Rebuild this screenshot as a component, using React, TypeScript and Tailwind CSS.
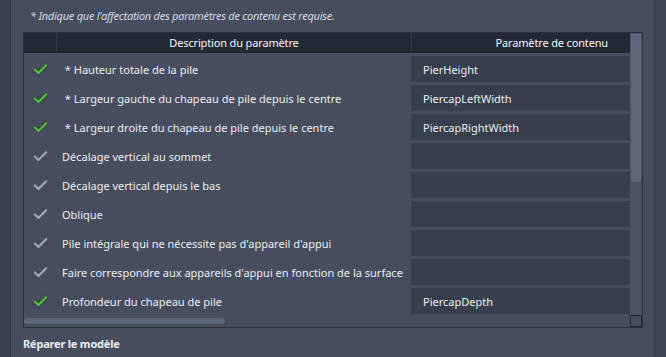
import { Check } from "lucide-react";

const rows = [
  { label: " * Hauteur totale de la pile", value: "PierHeight", ok: true },
  { label: " * Largeur gauche du chapeau de pile depuis le centre", value: "PiercapLeftWidth", ok: true },
  { label: " * Largeur droite du chapeau de pile depuis le centre", value: "PiercapRightWidth", ok: true },
  { label: "Décalage vertical au sommet", value: "", ok: false },
  { label: "Décalage vertical depuis le bas", value: "", ok: false },
  { label: "Oblique", value: "", ok: false },
  { label: "Pile intégrale qui ne nécessite pas d'appareil d'appui", value: "", ok: false },
  { label: "Faire correspondre aux appareils d'appui en fonction de la surface", value: "", ok: false },
  { label: "Profondeur du chapeau de pile", value: "PiercapDepth", ok: true },
];

function Tick({ ok }: { ok: boolean }) {
  return (
    <Check
      size={17}
      strokeWidth={3}
      className={ok ? "text-[#56c03a] drop-shadow-[0_0_1px_#1d3a14]" : "text-[#a3a9b4]"}
    />
  );
}

export default function App() {
  return (
    <div className="w-[666px] h-[357px] flex bg-[#454d5f] text-[11px] text-[#eceef2] font-['Noto_Sans',sans-serif] overflow-hidden">
      <div className="w-[11px] bg-[#3b4150] border-r border-[#2f3541]" />

      <div className="flex-1 flex flex-col pl-[12px]">
        <p className="italic text-[#d6dbe4] pt-[8px] pl-[7px] h-[32px] tracking-[-0.25px]">
          * Indique que l'affectation des paramètres de contenu est requise.
        </p>

        <div className="w-[620px] h-[296px] border border-[#2a2f3a] flex">
          <div className="flex-1 flex flex-col">
            {/* en-tête */}
            <div className="h-[20px] flex bg-[#232934] text-[#f2f4f7] tracking-[-0.15px]">
              <div className="w-[32px]" />
              <div className="w-px bg-[#323845]" />
              <div className="w-[354px] flex items-center justify-center">Description du paramètre</div>
              <div className="w-px bg-[#323845]" />
              <div className="flex-1 flex items-center justify-end pr-[22px]">Paramètre de contenu</div>
            </div>

            <div className="flex-1 flex flex-col pt-[3px] gap-[3px]">
              {rows.map((r) => (
                <div key={r.label} className="h-[26px] flex items-center">
                  <div className="w-[32px] flex justify-center pl-[1px] pt-px">
                    <Tick ok={r.ok} />
                  </div>
                  <div className="w-[355px] pl-[6px] pt-[2px] whitespace-pre">{r.label}</div>
                  <div className="flex-1 h-full bg-[#373e4d] flex items-center pl-[12px] pt-[2px]">{r.value}</div>
                </div>
              ))}
              <div className="h-[7px] flex items-center">
                <div className="w-[201px] h-[6px] rounded-full bg-[#5c6477]" />
              </div>
            </div>
          </div>

          {/* barre de défilement verticale */}
          <div className="w-[12px] flex flex-col">
            <div className="flex-1 bg-[#4a5265] flex flex-col pt-px">
              <div className="h-[148px] mx-px bg-[#5f687b] rounded-b-[3px]" />
            </div>
            <div className="h-[12px] border border-[#20252e]" />
          </div>
        </div>

        <p className="font-bold pt-[8px] tracking-[-0.2px]">Réparer le modèle</p>
      </div>

      <div className="w-[12px] bg-[#3e4556] border-l border-[#2f3541]" />
    </div>
  );
}
